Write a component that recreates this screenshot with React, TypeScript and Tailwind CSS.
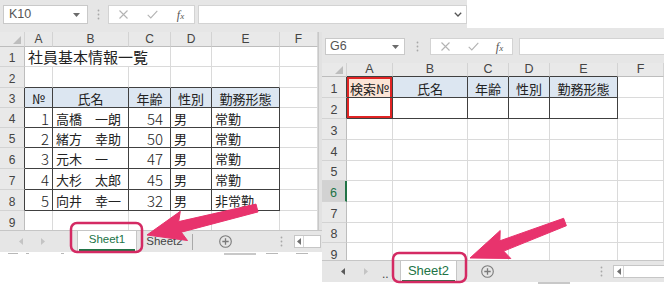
import React from "react";

const JP = "font-['Noto_Sans_CJK_JP','Noto_Sans',sans-serif]";
const LS = "font-['Liberation_Sans','Noto_Sans',sans-serif]";

function Caret() {
  return (
    <svg width="7" height="4" viewBox="0 0 7 4">
      <path d="M0 0h7L3.5 4z" fill="#6b6b6b" />
    </svg>
  );
}

function Chevron() {
  return (
    <svg width="8" height="5" viewBox="0 0 8 5">
      <path d="M0.8 0.8L4 4L7.2 0.8" fill="none" stroke="#555" strokeWidth="1.3" />
    </svg>
  );
}

function Grip() {
  return (
    <svg width="3" height="11" viewBox="0 0 3 11">
      <circle cx="1.5" cy="1.5" r="0.9" fill="#a8a8a8" />
      <circle cx="1.5" cy="5.5" r="0.9" fill="#a8a8a8" />
      <circle cx="1.5" cy="9.5" r="0.9" fill="#a8a8a8" />
    </svg>
  );
}

function XIcon() {
  return (
    <svg width="9" height="9" viewBox="0 0 9 9">
      <path d="M0.5 0.5L8.5 8.5M8.5 0.5L0.5 8.5" stroke="#b3b3b3" strokeWidth="1.1" />
    </svg>
  );
}

function CheckIcon() {
  return (
    <svg width="11" height="9" viewBox="0 0 11 9">
      <path d="M0.7 4.8L3.8 7.9L10.3 0.8" fill="none" stroke="#b3b3b3" strokeWidth="1.1" />
    </svg>
  );
}

function Fx() {
  return (
    <span className="font-['Liberation_Serif',serif] italic text-[12px] leading-none text-[#555]">
      f<span className="text-[9px]">x</span>
    </span>
  );
}

function LeftArrowTri({ color }: { color: string }) {
  return (
    <svg width="4" height="7" viewBox="0 0 4 7">
      <path d="M4 0v7L0 3.5z" fill={color} />
    </svg>
  );
}

function RightArrowTri({ color }: { color: string }) {
  return (
    <svg width="4" height="7" viewBox="0 0 4 7">
      <path d="M0 0v7L4 3.5z" fill={color} />
    </svg>
  );
}

function PlusCircle() {
  return (
    <svg width="13" height="13" viewBox="0 0 13 13">
      <circle cx="6.5" cy="6.5" r="5.8" fill="none" stroke="#7a7a7a" strokeWidth="1.1" />
      <path d="M6.5 3.3v6.4M3.3 6.5h6.4" stroke="#7a7a7a" strokeWidth="1.3" />
    </svg>
  );
}

function Corner() {
  return (
    <div className="bg-[#e9e9e9] border-r border-b border-r-[#d3d3d3] border-b-[#bdbdbd] flex items-end justify-end pr-[3px] pb-[2px]">
      <svg width="8" height="8" viewBox="0 0 8 8">
        <path d="M8 0v8H0z" fill="#bdbdbd" />
      </svg>
    </div>
  );
}

function LeftSheet() {
  const letters = ["A", "B", "C", "D", "E", "F"];
  const header = ["№", "氏名", "年齢", "性別", "勤務形態"];
  const data: (string | number)[][] = [
    [1, "高橋　一朗", 54, "男", "常勤"],
    [2, "緒方　幸助", 50, "男", "常勤"],
    [3, "元木　一", 47, "男", "常勤"],
    [4, "大杉　太郎", 45, "男", "常勤"],
    [5, "向井　幸一", 32, "男", "非常勤"],
  ];
  const out: React.ReactNode[] = [];
  out.push(<Corner key="corner" />);
  letters.forEach((l) =>
    out.push(
      <div
        key={"h" + l}
        className={`${LS} bg-[#e9e9e9] border-r border-b border-r-[#d3d3d3] border-b-[#bdbdbd] flex items-center justify-center text-[12px] leading-none text-[#444]`}
      >
        {l}
      </div>
    )
  );
  for (let r = 1; r <= 9; r++) {
    const inRows = r >= 3 && r <= 8;
    out.push(
      <div
        key={"r" + r}
        className={`${LS} bg-[#e9e9e9] border-r border-b border-b-[#d3d3d3] ${
          inRows ? "border-r-[#404040]" : "border-r-[#bdbdbd]"
        } flex items-center justify-center text-[12px] leading-none text-[#444] pt-[3px]`}
      >
        {r}
      </div>
    );
    if (r === 1) {
      out.push(
        <div
          key="title"
          className={`${JP} col-span-3 border-r border-b border-r-[#dadada] border-b-[#dadada] flex items-center pl-[3px] text-[15px] leading-none text-[#222] whitespace-nowrap`}
        >
          社員基本情報一覧
        </div>
      );
      for (let c = 4; c <= 6; c++) {
        out.push(
          <div key={`c1-${c}`} className="border-r border-b border-r-[#dadada] border-b-[#dadada]" />
        );
      }
      continue;
    }
    for (let c = 1; c <= 6; c++) {
      const inCols = c <= 5;
      const rd = inRows && inCols;
      const bd = r >= 2 && r <= 8 && inCols;
      let content: React.ReactNode = null;
      let extra = "";
      if (r === 3 && inCols) {
        content = header[c - 1];
        extra = "bg-[#dce6f1] justify-center text-[13px]";
      } else if (r >= 4 && r <= 8 && inCols) {
        content = data[r - 4][c - 1];
        if (c === 1) extra = "justify-end pr-[3px] text-[15px] font-light";
        else if (c === 3) extra = "justify-end pr-[7px] text-[15px] font-light";
        else extra = "justify-start pl-[3px] text-[13px]";
      }
      out.push(
        <div
          key={`c${r}-${c}`}
          className={`${JP} border-r border-b ${rd ? "border-r-[#404040]" : "border-r-[#dadada]"} ${
            bd ? "border-b-[#404040]" : "border-b-[#dadada]"
          } flex items-center leading-none text-[#222] whitespace-nowrap pt-[1px] ${extra}`}
        >
          {content}
        </div>
      );
    }
  }
  return (
    <div className="grid grid-cols-[25px_28px_76px_42px_41px_68px_38px] grid-rows-[15px_20px_21px_20px_20px_20px_21px_21px_21px_22px] w-[318px] h-[198px] overflow-hidden shrink-0">
      {out}
    </div>
  );
}

function RightSheet() {
  const letters = ["A", "B", "C", "D", "E", "F"];
  const header = ["検索№", "氏名", "年齢", "性別", "勤務形態"];
  const out: React.ReactNode[] = [];
  out.push(<Corner key="corner" />);
  letters.forEach((l, i) =>
    out.push(
      <div
        key={"h" + l}
        className={`${LS} bg-[#e9e9e9] border-r border-b border-r-[#d3d3d3] ${
          i < 5 ? "border-b-[#404040]" : "border-b-[#bdbdbd]"
        } flex items-center justify-center text-[12.5px] leading-none text-[#444]`}
      >
        {l}
      </div>
    )
  );
  for (let r = 1; r <= 9; r++) {
    const inRows = r >= 1 && r <= 2;
    const sel = r === 6;
    out.push(
      <div
        key={"r" + r}
        className={`${LS} border-b border-b-[#d3d3d3] ${
          sel
            ? "bg-[#d2d2d2] text-[#217346] border-r-2 border-r-[#217346]"
            : inRows
            ? "bg-[#e9e9e9] text-[#444] border-r border-r-[#404040]"
            : "bg-[#e9e9e9] text-[#444] border-r border-r-[#bdbdbd]"
        } flex items-center justify-center text-[12.5px] leading-none pt-[4px]`}
      >
        {r}
      </div>
    );
    for (let c = 1; c <= 6; c++) {
      const inCols = c <= 5;
      const t = inRows && inCols;
      let content: React.ReactNode = null;
      let extra = "";
      if (r === 1 && inCols) {
        content = header[c - 1];
        extra =
          c === 1
            ? "bg-[#fce4d6] justify-center text-[13px] shadow-[inset_2px_2px_0_#e02424,inset_-2px_0_0_#e02424]"
            : "bg-[#dce6f1] justify-center text-[13px]";
      } else if (r === 2 && c === 1) {
        extra = "shadow-[inset_2px_0_0_#e02424,inset_-2px_-2px_0_#e02424]";
      }
      out.push(
        <div
          key={`c${r}-${c}`}
          className={`${JP} border-r border-b ${t ? "border-r-[#404040]" : "border-r-[#dadada]"} ${
            t ? "border-b-[#404040]" : "border-b-[#dadada]"
          } flex items-center leading-none text-[#222] whitespace-nowrap pt-[2px] ${extra}`}
        >
          {content}
        </div>
      );
    }
  }
  return (
    <div className="grid grid-cols-[25px_46px_75px_41px_41px_68px_46px] grid-rows-[14px_21px_21px_21px_21px_20px_21px_21px_20px_21px] w-[342px] h-[197px] overflow-hidden shrink-0">
      {out}
    </div>
  );
}

export default function App() {
  return (
    <div className="relative w-[664px] h-[294px] bg-white overflow-hidden flex">
      {/* Left window */}
      <div className="w-[322px] h-[294px] flex flex-col shrink-0">
        <div className="w-[467px] h-[32px] shrink-0 bg-[#e6e6e6] flex items-start pt-[5px] pl-[3px]">
          <div className="w-[85px] h-[19px] bg-white border border-[#c9c9c9] flex items-center justify-between pl-[5px] pr-[7px]">
            <span className={`${LS} text-[12.5px] leading-none text-[#555]`}>K10</span>
            <Caret />
          </div>
          <div className="w-[20px] h-[19px] flex items-center justify-center">
            <Grip />
          </div>
          <div className="w-[87px] h-[19px] bg-white border border-[#d3d3d3] flex items-center">
            <div className="w-[29px] flex justify-center">
              <XIcon />
            </div>
            <div className="w-[29px] flex justify-center">
              <CheckIcon />
            </div>
            <div className="w-[27px] flex justify-center">
              <Fx />
            </div>
          </div>
          <div className="ml-[3px] w-[269px] h-[19px] bg-white border border-[#d3d3d3] flex items-center justify-end pr-[4px]">
            <Chevron />
          </div>
        </div>
        <div className="h-[198px] flex shrink-0">
          <LeftSheet />
          <div className="w-[4px] h-full bg-[#e2e2e2] border-l border-[#c8c8c8]" />
        </div>
        <div className="h-[22px] shrink-0 bg-[#e6e6e6] border-t border-[#c6c6c6] flex items-stretch">
          <div className="w-[77px] shrink-0 flex items-center pl-[19px]">
            <LeftArrowTri color="#c4c4c4" />
            <div className="w-[18px]" />
            <RightArrowTri color="#c4c4c4" />
          </div>
          <div className="w-[60px] shrink-0 bg-white border-x border-[#c6c6c6] flex flex-col items-center justify-center pt-[2px]">
            <span className={`${LS} text-[11.5px] leading-none text-[#217346]`}>Sheet1</span>
            <div className="mt-[4px] w-[56px] h-[2px] bg-[#217346]" />
          </div>
          <div className="w-[56px] shrink-0 flex items-center">
            <span className={`${LS} flex-1 text-center text-[11.5px] leading-none text-[#444]`}>Sheet2</span>
            <div className="w-px h-[16px] bg-[#a9a9a9]" />
          </div>
          <div className="ml-[26px] flex items-center">
            <PlusCircle />
          </div>
          <div className="ml-[48px] flex items-center">
            <Grip />
          </div>
          <div className="ml-[11px] flex items-center">
            <div className="w-[27px] h-[13px] bg-white border border-[#c6c6c6] flex items-center">
              <div className="w-[9px] h-full border-r border-[#d6d6d6] flex items-center justify-center">
                <LeftArrowTri color="#707070" />
              </div>
            </div>
          </div>
        </div>
        <div className="flex items-start h-[3px] pt-px">
          <div className="ml-[8px] w-[10px] h-[1px] bg-[#b8b8b8]" />
          <div className="ml-[8px] w-[3px] h-[1px] bg-[#b8b8b8]" />
          <div className="ml-[32px] w-[3px] h-[1px] bg-[#b8b8b8]" />
          <div className="ml-[160px] w-[32px] h-[2px] bg-[#c8c8c8]" />
          <div className="ml-[10px] w-[12px] h-[1px] bg-[#b8b8b8]" />
          <div className="ml-[18px] w-[12px] h-[1px] bg-[#b8b8b8]" />
        </div>
      </div>

      {/* Right window */}
      <div className="mt-[28px] w-[342px] h-[266px] flex flex-col shrink-0 bg-white">
        <div className="h-[35px] shrink-0 bg-[#e6e6e6] flex items-start pt-[10px] pl-[3px]">
          <div className="w-[80px] h-[17px] bg-white border border-[#c9c9c9] flex items-center justify-between pl-[4px] pr-[5px]">
            <span className={`${LS} text-[12.5px] leading-none text-[#555]`}>G6</span>
            <Caret />
          </div>
          <div className="w-[25px] h-[17px] flex items-center justify-center">
            <Grip />
          </div>
          <div className="w-[83px] h-[17px] bg-white border border-[#d3d3d3] flex items-center">
            <div className="w-[28px] flex justify-center">
              <XIcon />
            </div>
            <div className="w-[28px] flex justify-center">
              <CheckIcon />
            </div>
            <div className="w-[25px] flex justify-center">
              <Fx />
            </div>
          </div>
          <div className="ml-[6px] flex-1 h-[17px] bg-white border border-[#d3d3d3] border-r-0" />
        </div>
        <RightSheet />
        <div className="h-[22px] shrink-0 bg-[#e6e6e6] border-t border-[#c6c6c6] flex items-stretch">
          <div className="w-[78px] shrink-0 flex items-center pl-[19px]">
            <LeftArrowTri color="#5a5a5a" />
            <div className="w-[19px]" />
            <RightArrowTri color="#c4c4c4" />
            <span className={`${LS} ml-[14px] text-[12px] leading-none text-[#444] pt-[4px]`}>..</span>
          </div>
          <div className="w-[57px] shrink-0 bg-white border-x border-[#c6c6c6] flex flex-col items-center justify-center pt-[2px]">
            <span className={`${LS} text-[13px] leading-none text-[#217346]`}>Sheet2</span>
            <div className="mt-[3px] w-[53px] h-[2px] bg-[#217346]" />
          </div>
          <div className="ml-[24px] flex items-center">
            <PlusCircle />
          </div>
          <div className="ml-[106px] flex items-center">
            <Grip />
          </div>
          <div className="ml-[10px] flex-1 flex items-center">
            <div className="w-full h-[13px] bg-white border border-r-0 border-[#c6c6c6] flex items-center">
              <div className="w-[10px] h-full border-r border-[#d6d6d6] flex items-center justify-center">
                <LeftArrowTri color="#707070" />
              </div>
            </div>
          </div>
        </div>
        <div className="flex items-start h-[4px]">
          <div className="ml-[216px] w-[32px] h-[2px] bg-[#c8c8c8]" />
        </div>
      </div>

      {/* Annotations */}
      <svg className="absolute left-0 top-0 pointer-events-none" width="664" height="294" viewBox="0 0 664 294">
        <rect x="71" y="223" width="71" height="29" rx="6" fill="none" stroke="#d42a63" strokeWidth="2.5" />
        <rect x="393" y="253" width="73" height="29" rx="6" fill="none" stroke="#d42a63" strokeWidth="2.5" />
        <polygon
          points="147,235 187.5,240.5 181.3,232.2 258,211.9 256,204.1 178.7,221.6 180.3,211.3"
          fill="#e8336d"
          stroke="#e8336d"
          strokeWidth="1"
          strokeLinejoin="round"
        />
        <polygon
          points="470,258 510.8,258.5 503.7,251.1 566.4,225.7 563.6,218.3 499.9,240.8 500.2,230.5"
          fill="#e8336d"
          stroke="#e8336d"
          strokeWidth="1"
          strokeLinejoin="round"
        />
      </svg>
    </div>
  );
}
